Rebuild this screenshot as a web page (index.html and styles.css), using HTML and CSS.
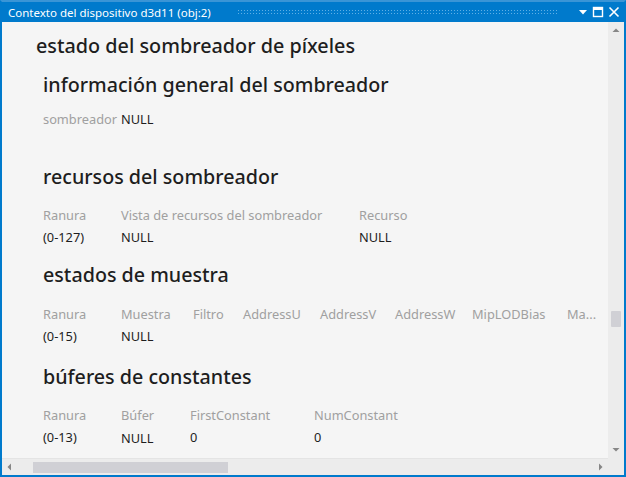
FILE: index.html
```html
<!DOCTYPE html>
<html lang="es">
<head>
<meta charset="utf-8">
<link rel="stylesheet" href="styles.css">
</head>
<body>
<div class="window">
  <div class="titlebar">
    <span class="title">Contexto del dispositivo d3d11 (obj:2)</span>
    <span class="grip"></span>
    <span class="tb-icons">
      <svg width="10" height="10" viewBox="0 0 10 10"><path d="M1 3h8L5 7.5z" fill="#fff"/></svg>
      <svg width="12" height="12" viewBox="0 0 12 12"><rect x="1.5" y="1.5" width="9" height="9" fill="none" stroke="#fff" stroke-width="1.4"/><rect x="1" y="1" width="10" height="3" fill="#fff"/></svg>
      <svg width="12" height="12" viewBox="0 0 12 12"><path d="M1.5 1.5l9 9M10.5 1.5l-9 9" stroke="#fff" stroke-width="1.6"/></svg>
    </span>
  </div>
  <div class="main">
    <div class="viewport">
      <div class="content">
        <h1 class="h1">estado del sombreador de píxeles</h1>
        <section class="sec s-info">
          <h2 class="h2">información general del sombreador</h2>
          <div class="kv"><span class="lbl">sombreador</span><span class="val">NULL</span></div>
        </section>
        <section class="sec s-res">
          <h2 class="h2">recursos del sombreador</h2>
          <div class="grid g-res">
            <span class="lbl">Ranura</span><span class="lbl">Vista de recursos del sombreador</span><span class="lbl">Recurso</span>
            <span class="val">(0-127)</span><span class="val">NULL</span><span class="val">NULL</span>
          </div>
        </section>
        <section class="sec s-samp">
          <h2 class="h2">estados de muestra</h2>
          <div class="grid g-samp">
            <span class="lbl">Ranura</span><span class="lbl">Muestra</span><span class="lbl">Filtro</span><span class="lbl">AddressU</span><span class="lbl">AddressV</span><span class="lbl">AddressW</span><span class="lbl">MipLODBias</span><span class="lbl">Ma...</span>
            <span class="val">(0-15)</span><span class="val">NULL</span><span></span><span></span><span></span><span></span><span></span><span></span>
          </div>
        </section>
        <section class="sec s-cb">
          <h2 class="h2">búferes de constantes</h2>
          <div class="grid g-cb">
            <span class="lbl">Ranura</span><span class="lbl">Búfer</span><span class="lbl">FirstConstant</span><span class="lbl">NumConstant</span>
            <span class="val">(0-13)</span><span class="val low">NULL</span><span class="val">0</span><span class="val">0</span>
          </div>
        </section>
      </div>
    </div>
    <div class="vscroll">
      <svg class="arrow" width="16" height="16" viewBox="0 0 16 16"><path d="M4.5 10h7L8 6.5z" fill="#868686"/></svg>
      <div class="vtrack"><div class="vthumb"></div></div>
      <svg class="arrow" width="16" height="16" viewBox="0 0 16 16"><path d="M4.5 6h7L8 9.5z" fill="#868686"/></svg>
    </div>
  </div>
  <div class="hbar">
    <div class="hscroll">
      <svg class="arrow" width="16" height="16" viewBox="0 0 16 16"><path d="M9 4.5v7L5.5 8z" fill="#868686"/></svg>
      <div class="htrack"><div class="hthumb"></div></div>
      <svg class="arrow" width="16" height="16" viewBox="0 0 16 16"><path d="M7 4.5v7L10.5 8z" fill="#868686"/></svg>
    </div>
    <div class="corner"></div>
  </div>
</div>
</body>
</html>
```
FILE: styles.css
```css
* { box-sizing: border-box; margin: 0; padding: 0; }
html, body { width: 626px; height: 477px; overflow: hidden; background: #007acc; }
body { font-family: "Noto Sans", "Open Sans", sans-serif; }
.window {
  width: 626px; height: 477px;
  border: 2px solid #007acc; border-top: 2px solid #3a95d6;
  display: flex; flex-direction: column;
  background: #f5f5f5;
}
.titlebar {
  height: 20px; background: #007acc; color: #fff;
  display: flex; align-items: center; padding: 0 4px 0 6px;
}
.title { font-size: 11.5px; white-space: nowrap; }
.grip {
  flex: 1; height: 6px; margin: 0 20px 0 26px;
  background-image: radial-gradient(circle, #5fb0e6 0.8px, transparent 1px);
  background-size: 3px 3px;
}
.tb-icons { display: flex; align-items: center; gap: 4px; }
.tb-icons svg { display: block; }
.main { flex: 1; display: flex; min-height: 0; }
.viewport { flex: 1; overflow: hidden; }
.content { padding: 11px 0 0 34px; width: 760px; color: #1e1e1e; }
.h1 { font-size: 19.8px; font-weight: 500; line-height: 26px; }
.sec { padding-left: 7px; }
.h2 { font-size: 19.7px; font-weight: 500; line-height: 28px; }
.s-info { margin-top: 12px; }
.kv { margin-top: 11px; display: flex; line-height: 18px; }
.kv .lbl { margin-right: 4px; }
.lbl { color: #a0a0a0; font-size: 12.8px; white-space: nowrap; }
.val { color: #1e1e1e; font-size: 12.8px; white-space: nowrap; }
.s-res { margin-top: 35px; }
.s-samp { margin-top: 13px; }
.s-cb { margin-top: 16px; }
.grid { display: grid; margin-top: 13px; line-height: 22px; grid-auto-rows: 22px; }
.g-samp { margin-top: 14px; }
.g-res { grid-template-columns: 78px 238px auto; }
.g-samp { grid-template-columns: 78px 72px 50px 77px 75px 77px 95px auto; }
.g-cb { grid-template-columns: 78px 69px 124px auto; }
.low { position: relative; top: 1px; }
.vscroll { width: 16px; background: #ececec; display: flex; flex-direction: column; }
.vtrack { flex: 1; position: relative; }
.vthumb { position: absolute; left: 3px; width: 10px; top: 273px; height: 16px; background: #d0d0d5; border-radius: 1px; }
.arrow { display: block; flex: none; }
.hbar { height: 17px; display: flex; }
.hscroll { flex: 1; display: flex; align-items: center; background: #ececec; border-top: 1px solid #e4e4e4; }
.htrack { flex: 1; position: relative; height: 11px; }
.hthumb { position: absolute; left: 15px; top: 0; width: 195px; height: 11px; background: #d0d0d5; }
.corner { width: 16px; background: #ececec; }
```
